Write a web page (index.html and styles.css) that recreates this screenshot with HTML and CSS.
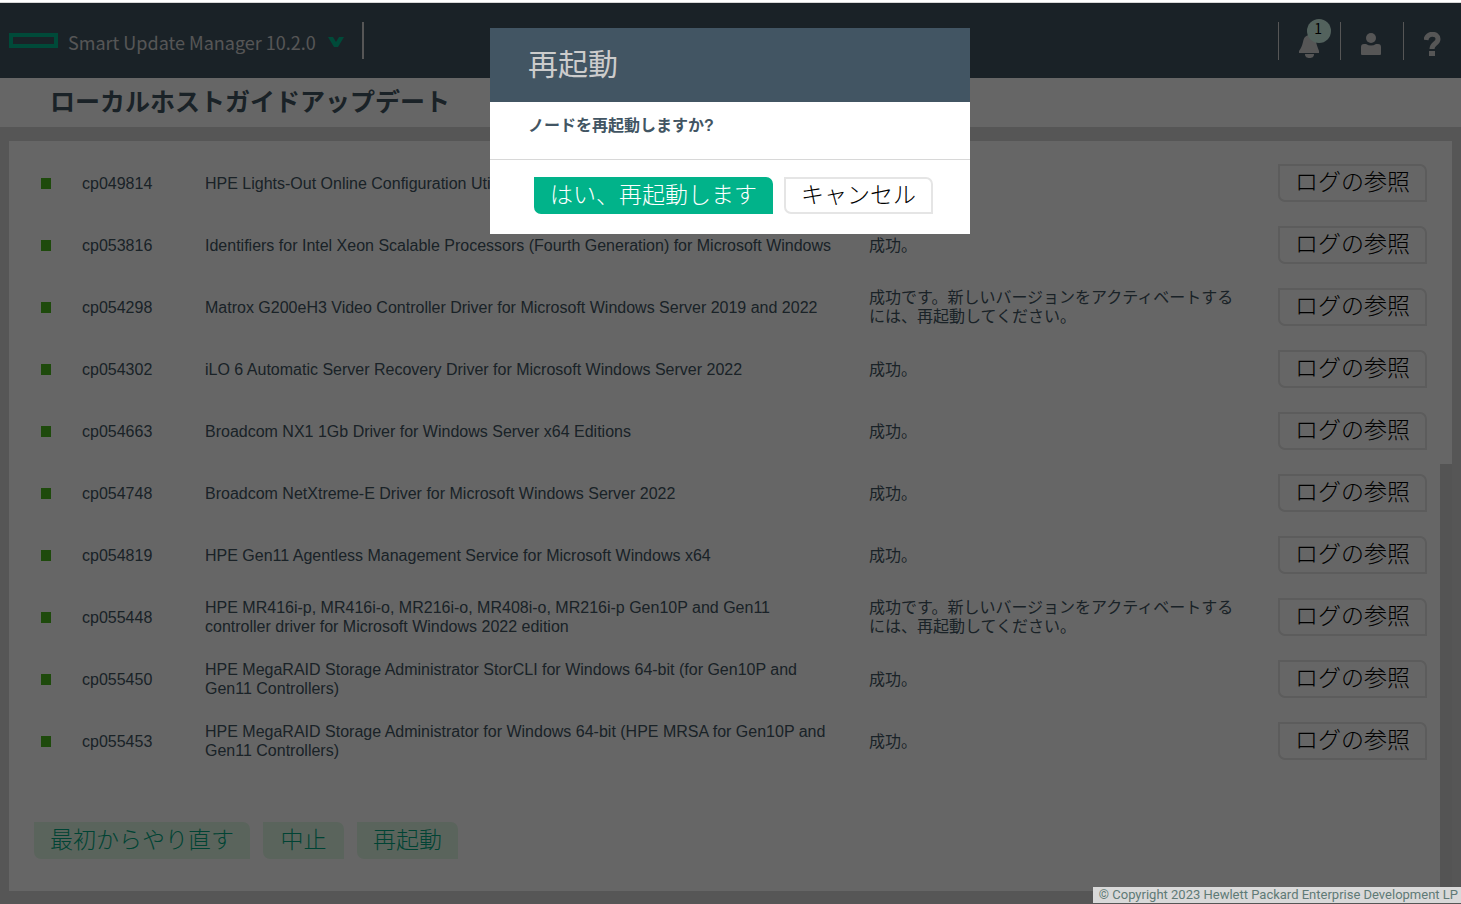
FILE: index.html
```html
<!DOCTYPE html>
<html lang="ja">
<head>
<meta charset="utf-8">
<title>Smart Update Manager</title>
<link rel="stylesheet" href="styles.css">
</head>
<body>
<div class="app">
  <header class="topbar">
    <svg class="logo" width="49" height="15" viewBox="0 0 49 15" aria-hidden="true"><rect x="2" y="2" width="45" height="11" fill="none" stroke="#01b98e" stroke-width="4"/></svg>
    <button class="product" type="button">Smart Update Manager 10.2.0
      <svg width="18" height="12" viewBox="0 0 18 12" aria-hidden="true"><path d="M1 1h5l3 5 3-5h5l-6 10H7z" fill="#01b98e"/></svg>
    </button>
    <span class="divider"></span>
    <nav class="tools">
      <button class="tool" type="button" aria-label="通知 1">
        <svg width="40" height="44" viewBox="0 0 40 44" aria-hidden="true"><path d="M0 32c2-3 3-5 4-9 1-5 3-7 7-7s5 2 6 7c1 4 2 6 3 9v2H0z" fill="#d6d6d6"/><path d="M6 35h9c0 3-2 4-4.500 4S6 38 6 35z" fill="#d6d6d6"/><circle cx="20" cy="12" r="12" fill="#cff5e8"/></svg>
        <span class="badge">1</span>
      </button>
      <button class="tool" type="button" aria-label="ユーザー">
        <svg width="20" height="23" viewBox="0 0 20 23" aria-hidden="true"><circle cx="10" cy="5" r="5" fill="#d6d6d6"/><path d="M0 14q0-3 3-3h2q5 3 10 0h2q3 0 3 3v7q0 1-1 1H1q-1 0-1-1z" fill="#d6d6d6"/></svg>
      </button>
      <button class="tool" type="button" aria-label="ヘルプ">
        <svg width="18" height="25" viewBox="0 0 18 25" aria-hidden="true"><path d="M2 8C3 0 14 1 14 7c0 5-6 4-6 10" fill="none" stroke="#d6d6d6" stroke-width="5"/><rect x="5" y="19" width="6" height="5" fill="#d6d6d6"/></svg>
      </button>
    </nav>
  </header>
  <h1 class="page-title">ローカルホストガイドアップデート</h1>
  <main class="main">
    <div class="panel">
      <div class="content">
        <table class="results">
          <colgroup><col class="c-state"><col class="c-id"><col class="c-name"><col class="c-result"><col class="c-log"></colgroup>
          <tbody>
            <tr><td><span class="ok"></span></td><td>cp049814</td><td>HPE Lights-Out Online Configuration Utility</td><td></td><td><button class="btn" type="button">ログの参照</button></td></tr>
            <tr><td><span class="ok"></span></td><td>cp053816</td><td>Identifiers for Intel Xeon Scalable Processors (Fourth Generation) for Microsoft Windows</td><td>成功。</td><td><button class="btn" type="button">ログの参照</button></td></tr>
            <tr><td><span class="ok"></span></td><td>cp054298</td><td>Matrox G200eH3 Video Controller Driver for Microsoft Windows Server 2019 and 2022</td><td>成功です。新しいバージョンをアクティベートするには、再起動してください。</td><td><button class="btn" type="button">ログの参照</button></td></tr>
            <tr><td><span class="ok"></span></td><td>cp054302</td><td>iLO 6 Automatic Server Recovery Driver for Microsoft Windows Server 2022</td><td>成功。</td><td><button class="btn" type="button">ログの参照</button></td></tr>
            <tr><td><span class="ok"></span></td><td>cp054663</td><td>Broadcom NX1 1Gb Driver for Windows Server x64 Editions</td><td>成功。</td><td><button class="btn" type="button">ログの参照</button></td></tr>
            <tr><td><span class="ok"></span></td><td>cp054748</td><td>Broadcom NetXtreme-E Driver for Microsoft Windows Server 2022</td><td>成功。</td><td><button class="btn" type="button">ログの参照</button></td></tr>
            <tr><td><span class="ok"></span></td><td>cp054819</td><td>HPE Gen11 Agentless Management Service for Microsoft Windows x64</td><td>成功。</td><td><button class="btn" type="button">ログの参照</button></td></tr>
            <tr><td><span class="ok"></span></td><td>cp055448</td><td>HPE MR416i-p, MR416i-o, MR216i-o, MR408i-o, MR216i-p Gen10P and Gen11 controller driver for Microsoft Windows 2022 edition</td><td>成功です。新しいバージョンをアクティベートするには、再起動してください。</td><td><button class="btn" type="button">ログの参照</button></td></tr>
            <tr><td><span class="ok"></span></td><td>cp055450</td><td>HPE MegaRAID Storage Administrator StorCLI for Windows 64-bit (for Gen10P and Gen11 Controllers)</td><td>成功。</td><td><button class="btn" type="button">ログの参照</button></td></tr>
            <tr><td><span class="ok"></span></td><td>cp055453</td><td>HPE MegaRAID Storage Administrator for Windows 64-bit (HPE MRSA for Gen10P and Gen11 Controllers)</td><td>成功。</td><td><button class="btn" type="button">ログの参照</button></td></tr>
          </tbody>
        </table>
        <div class="actions">
          <button class="btn soft" type="button">最初からやり直す</button>
          <button class="btn soft" type="button">中止</button>
          <button class="btn soft" type="button">再起動</button>
        </div>
      </div>
      <div class="track"><div class="thumb"></div></div>
    </div>
  </main>
</div>
<div class="overlay">
  <section class="dialog" role="dialog" aria-modal="true" aria-labelledby="dialog-title">
    <h2 class="dialog-title" id="dialog-title">再起動</h2>
    <p class="dialog-text">ノードを再起動しますか?</p>
    <div class="dialog-actions">
      <button class="btn primary" type="button">はい、再起動します</button>
      <button class="btn" type="button">キャンセル</button>
    </div>
  </section>
</div>
<footer class="copyright">© Copyright 2023 Hewlett Packard Enterprise Development LP</footer>
</body>
</html>
```
FILE: styles.css
```css
* { box-sizing: border-box; }

body {
  margin: 0;
  background: #fff;
  color: #425563;
  font: 16px/19px "Liberation Sans", "Noto Sans CJK JP", sans-serif;
}

button {
  font: inherit;
  color: inherit;
  background: none;
  border: 0;
  padding: 0;
}

.app {
  display: flex;
  flex-direction: column;
  min-height: 100vh;
  padding-top: 3px;
  background: linear-gradient(#fff 2px, #d7d7d7 2px);
}

.topbar {
  display: flex;
  align-items: center;
  height: 75px;
  padding-left: 9px;
  background: #425563;
}

.product {
  display: flex;
  align-items: center;
  gap: 11px;
  margin: 2px 17px 0 10px;
  color: #d6d6d6;
  font: 18px/30px "Noto Sans CJK JP", sans-serif;
}

.divider {
  width: 2px;
  height: 37px;
  background: #d6d6d6;
}

.tools {
  display: flex;
  margin-left: auto;
}

.tool {
  display: flex;
  align-items: center;
  justify-content: center;
  position: relative;
  width: 63px;
  height: 38px;
  padding: 7px 3px 0 0;
  border-left: 1px solid #d6d6d6;
}

.tool:first-child {
  width: 62px;
  padding: 0 0 0 18px;
}

.tool:last-child {
  width: 58px;
  padding-right: 0;
}

.badge {
  position: absolute;
  top: -3px;
  right: 18px;
  color: #000;
  font: 14px/18px "Noto Sans CJK JP", sans-serif;
}

.page-title {
  margin: 0;
  padding: 4px 50px 9px;
  background: #fff;
  font: bold 25px/36px "Noto Sans CJK JP", sans-serif;
}

.main {
  display: flex;
  flex: 1;
  padding: 14px 9px 13px;
}

.panel {
  display: flex;
  flex: 1;
  background: #fff;
}

.content {
  flex: 1;
  padding: 11px 13px 32px 25px;
}

.track {
  width: 12px;
  background: #d1d1d1;
}

.thumb {
  height: 43%;
  background: #fff;
}

.results {
  width: 100%;
  table-layout: fixed;
  border-collapse: collapse;
}

.c-state { width: 48px; }
.c-id { width: 123px; }
.c-result { width: 409px; }
.c-log { width: 149px; }

.results td {
  height: 62px;
  padding: 0 33px 0 0;
  vertical-align: middle;
}

.results td:first-child { padding: 0 0 0 7px; }
.results td:last-child { padding: 0; }

.ok {
  display: block;
  width: 10px;
  height: 11px;
  background: #4cb81e;
}

.btn {
  display: block;
  height: 37px;
  padding: 0 15px 5px;
  border: 2px solid #e5e5e5;
  border-radius: 0 7px 0 7px;
  color: #000;
  font: 300 23px/28px "Noto Sans CJK JP", sans-serif;
  white-space: nowrap;
}

.results .btn {
  height: 38px;
  padding-bottom: 7px;
}

.soft {
  min-width: 81px;
  padding: 0 14px 5px;
  border-color: #e2fae7;
  background: #e2fae7;
  color: #01a982;
}

.actions {
  display: flex;
  gap: 13px;
  margin-top: 50px;
}

.overlay {
  position: fixed;
  inset: 3px 0 0;
  display: flex;
  align-items: flex-start;
  justify-content: center;
  padding: 25px 1px 0 0;
  background: rgba(0, 0, 0, 0.6);
}

.dialog {
  width: 480px;
  background: #fff;
}

.dialog-title {
  margin: 0;
  padding: 12px 38px 18px;
  background: #425563;
  color: #ccc;
  font: 30px/44px "Noto Sans CJK JP", sans-serif;
}

.dialog-text {
  margin: 0;
  padding: 14px 38px 24px;
  border-bottom: 1px solid #d8d8d8;
  font-weight: bold;
}

.dialog-actions {
  display: flex;
  justify-content: flex-end;
  gap: 11px;
  padding: 17px 37px 20px;
}

.primary {
  padding: 0 14px 5px;
  border-color: #01b38a;
  background: #01b38a;
  color: #fff;
}

.copyright {
  position: fixed;
  right: 0;
  bottom: 1px;
  padding: 0 3px 0 6px;
  background: #d9d9d9;
  color: #5f7a76;
  font: 13px/16px Roboto, "Liberation Sans", sans-serif;
}
```
